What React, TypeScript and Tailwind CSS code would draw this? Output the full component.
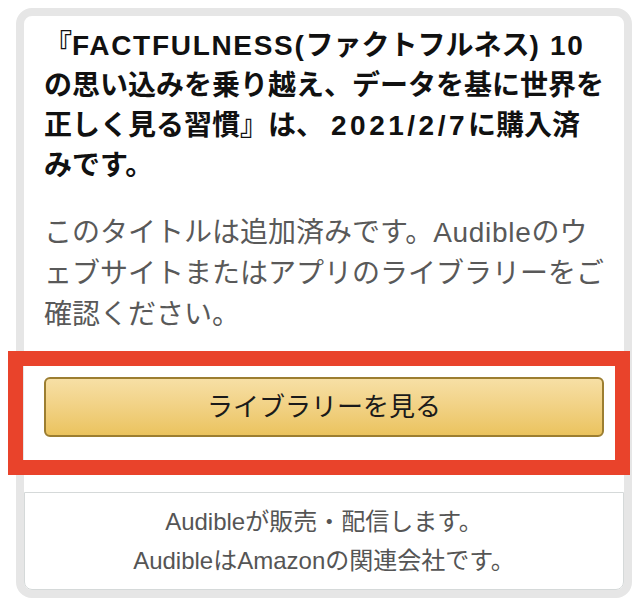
import React from 'react';

const font = 'font-["Liberation_Sans","Noto_Sans_CJK_JP",sans-serif]';

export default function App() {
  return (
    <div className={`relative w-[640px] h-[610px] bg-white ${font}`}>
      {/* カード */}
      <div className="ml-4 mr-2 mt-2 h-[590px] rounded-[16px] border-8 border-[#e6e6e6] bg-white flex flex-col">
        <div className="px-5 pt-[10px]">
          <h1 className="text-[28px] leading-[40px] font-bold text-[#111] whitespace-nowrap">
            『<span className="tracking-[1.7px]">FACTFULNESS(</span>ファクトフルネス
            <span className="tracking-[1.7px]">) 10</span>
            <br />
            の思い込みを乗り越え、データを基に世界を
            <br />
            正しく見る習慣』は、<span className="ml-[7px] tracking-[3.5px]">2021/2/7</span>に購入済
            <br />
            みです。
          </h1>
          <p className="mt-[26px] text-[28px] leading-[41px] text-[#595959] whitespace-nowrap">
            このタイトルは追加済みです。<span className="tracking-[0.7px]">Audible</span>のウ
            <br />
            ェブサイトまたはアプリのライブラリーをご
            <br />
            確認ください。
          </p>
          <button
            type="button"
            className="mt-[42px] w-[560px] h-[60px] rounded-[6px] border-2 border-[#9c7e31] bg-gradient-to-b from-[#f7dfa5] to-[#ebc35e] text-[26px] text-[#1a1a1a] flex items-center justify-center"
          >
            ライブラリーを見る
          </button>
        </div>

        {/* フッター */}
        <div className="mt-auto border border-[#d5d9d9] rounded-b-[8px] pt-[9px] pb-[9px] text-center text-[24px] leading-[39px] text-[#555]">
          <p>Audibleが販売・配信します。</p>
          <p>AudibleはAmazonの関連会社です。</p>
        </div>
      </div>

      {/* 赤枠の注釈 */}
      <div className="absolute left-2 top-[343px] w-[622px] h-[124px] border-[15px] border-[#e9432b] pointer-events-none" />
    </div>
  );
}
